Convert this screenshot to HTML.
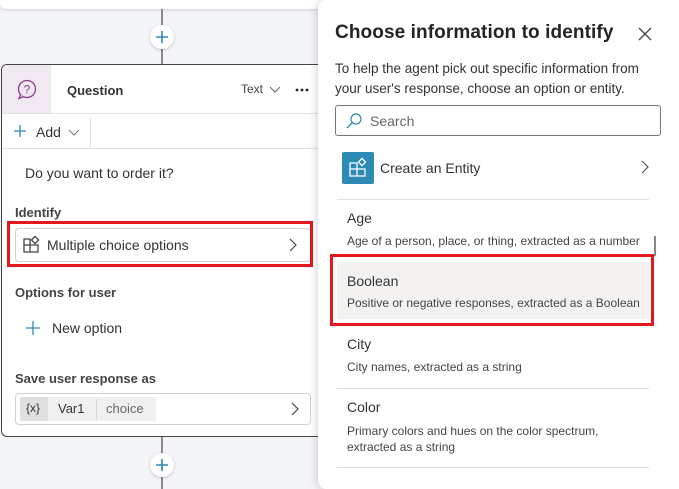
<!DOCTYPE html>
<html><head><meta charset="utf-8"><style>
*{margin:0;padding:0;box-sizing:border-box}
body{width:679px;height:489px;overflow:hidden;background:#f3f5f8;font-family:"Liberation Sans",sans-serif;color:#242424;position:relative}
.a{position:absolute}
.t{position:absolute;white-space:nowrap}
</style></head><body>
<div class="a" style="left:0;top:-10px;width:330px;height:19px;background:#fff;border-radius:6px;box-shadow:0 1px 3px rgba(0,0,0,.15)"></div>
<div class="a" style="left:161px;top:9px;width:2px;height:56px;background:#8a8a8a"></div>
<div class="a" style="left:161px;top:436px;width:2px;height:53px;background:#8a8a8a"></div>
<div class="a" style="left:150px;top:25px;width:24px;height:24px;border-radius:50%;background:#fff;box-shadow:0 1px 3px rgba(0,0,0,.2)"><svg width="24" height="24"><path d="M12 6v12M6 12h12" stroke="#2b88b0" stroke-width="1.6"/></svg></div>
<div class="a" style="left:150px;top:453px;width:24px;height:24px;border-radius:50%;background:#fff;box-shadow:0 1px 3px rgba(0,0,0,.2)"><svg width="24" height="24"><path d="M12 6v12M6 12h12" stroke="#2b88b0" stroke-width="1.6"/></svg></div>
<div class="a" style="left:1px;top:64px;width:340px;height:373px;background:#fff;border:1px solid #444;border-radius:6px;overflow:hidden">
 <div class="a" style="left:0;top:0;width:49px;height:49px;background:#f0e9f1"><svg width="49" height="49"><circle cx="25" cy="24" r="8.5" fill="none" stroke="#8a3f8a" stroke-width="1.3"/><path d="M18.5 29.5l-1.5 4 4.5-2" fill="#f0e9f1" stroke="#8a3f8a" stroke-width="1.3"/><text x="25" y="28.5" font-size="12" text-anchor="middle" fill="#8a3f8a" font-family="Liberation Sans">?</text></svg></div>
 <div class="t" style="left:65px;top:18px;font-size:13px;font-weight:bold;color:#333">Question</div>
 <div class="t" style="left:239px;top:17px;font-size:12px;color:#444">Text</div>
 <svg class="a" style="left:266px;top:19px" width="14" height="10"><path d="M2 3l5 5 5-5" fill="none" stroke="#666"/></svg>
 <svg class="a" style="left:292px;top:22px" width="16" height="6"><circle cx="3" cy="3" r="1.4" fill="#222"/><circle cx="8" cy="3" r="1.4" fill="#222"/><circle cx="13" cy="3" r="1.4" fill="#222"/></svg>
 <div class="a" style="left:0;top:48px;width:340px;height:1px;background:#e1e1e1"></div>
 <svg class="a" style="left:11px;top:59px" width="14" height="14"><path d="M7 1v12M1 7h12" stroke="#2b88b0" stroke-width="1.3"/></svg>
 <div class="t" style="left:34px;top:59px;font-size:14px;color:#333">Add</div>
 <svg class="a" style="left:66px;top:62px" width="12" height="10"><path d="M1 3l5 5 5-5" fill="none" stroke="#777"/></svg>
 <div class="a" style="left:88px;top:53px;width:1px;height:30px;background:#e1e1e1"></div>
 <div class="a" style="left:0;top:83px;width:340px;height:1px;background:#e1e1e1"></div>
 <div class="t" style="left:23px;top:100px;font-size:14px;color:#333">Do you want to order it?</div>
 <div class="t" style="left:13px;top:140px;font-size:13px;font-weight:bold;color:#444">Identify</div>
 <div class="a" style="left:13px;top:163px;width:296px;height:34px;border:1px solid #d1d1d1;border-radius:4px"></div>
 <svg class="a" style="left:20px;top:170px" width="20" height="20"><path d="M2 4h6v6H2zM2 10h6v7H2zM8 10h8v7H8z" fill="none" stroke="#444" stroke-width="1.3"/><rect x="10.5" y="2.5" width="5" height="5" transform="rotate(45 13 5)" fill="none" stroke="#444" stroke-width="1.3"/></svg>
 <div class="t" style="left:45px;top:172px;font-size:14px;color:#333">Multiple choice options</div>
 <svg class="a" style="left:286px;top:173px" width="10" height="14"><path d="M2 1l6 6-6 6" fill="none" stroke="#444" stroke-width="1.2"/></svg>
 <div class="t" style="left:13px;top:220px;font-size:13px;font-weight:bold;color:#444">Options for user</div>
 <svg class="a" style="left:23px;top:255px" width="16" height="16"><path d="M8 1v14M1 8h14" stroke="#2b88b0" stroke-width="1.3"/></svg>
 <div class="t" style="left:50px;top:255px;font-size:14px;color:#333">New option</div>
 <div class="t" style="left:13px;top:306px;font-size:13px;font-weight:bold;color:#444">Save user response as</div>
 <div class="a" style="left:13px;top:328px;width:296px;height:32px;border:1px solid #d1d1d1;border-radius:4px"></div>
 <div class="a" style="left:18px;top:332px;width:28px;height:24px;background:#e0e0e0;border-radius:2px 0 0 2px"></div>
 <div class="a" style="left:46px;top:332px;width:108px;height:24px;background:#f0f0f0"></div>
 <div class="a" style="left:94px;top:334px;width:1px;height:20px;background:#d6d6d6"></div>
 <div class="t" style="left:24px;top:336px;font-size:12px;color:#333">{x}</div>
 <div class="t" style="left:56px;top:336px;font-size:13px;color:#333">Var1</div>
 <div class="t" style="left:104px;top:336px;font-size:13px;color:#666">choice</div>
 <svg class="a" style="left:288px;top:337px" width="10" height="14"><path d="M2 1l6 6-6 6" fill="none" stroke="#444" stroke-width="1.2"/></svg>
</div>
<div class="a" style="left:7px;top:221px;width:306px;height:46px;border:3px solid #e3191e"></div>
<div class="a" style="left:318px;top:0;width:361px;height:489px;background:#fff;border-radius:8px 0 0 8px;box-shadow:-2px 0 8px rgba(0,0,0,.15)">
 <div class="t" style="left:17px;top:22px;font-size:19px;font-weight:bold;color:#242424;letter-spacing:0.1px">Choose information to identify</div>
 <svg class="a" style="left:320px;top:27px" width="14" height="14"><path d="M1 1l12 12M13 1L1 13" stroke="#444" stroke-width="1.3"/></svg>
 <div class="t" style="left:17px;top:59px;font-size:13.5px;line-height:20px;color:#333">To help the agent pick out specific information from<br>your user's response, choose an option or entity.</div>
 <div class="a" style="left:17px;top:105px;width:326px;height:31px;border:1px solid #777;border-radius:3px"></div>
 <svg class="a" style="left:27px;top:112px" width="18" height="18"><circle cx="11" cy="7" r="5" fill="none" stroke="#2b88b0" stroke-width="1.2"/><path d="M7.5 10.5L2 16" stroke="#2b88b0" stroke-width="1.3"/></svg>
 <div class="t" style="left:52px;top:113px;font-size:14px;color:#666">Search</div>
 <div class="a" style="left:24px;top:152px;width:32px;height:32px;background:#2d8ab5;border-radius:2px"><svg width="32" height="32"><path d="M8 11h7v6H8zM8 17h7v7H8zM15 17h8v7h-8z" fill="none" stroke="#fff" stroke-width="1.3"/><rect x="17.5" y="7.5" width="5" height="5" transform="rotate(45 20 10)" fill="none" stroke="#fff" stroke-width="1.3"/></svg></div>
 <div class="t" style="left:62px;top:160px;font-size:14px;color:#333">Create an Entity</div>
 <svg class="a" style="left:322px;top:160px" width="10" height="14"><path d="M2 1l6 6-6 6" fill="none" stroke="#555" stroke-width="1.2"/></svg>
 <div class="a" style="left:19px;top:199px;width:312px;height:1px;background:#e1e1e1"></div>
 <div class="t" style="left:29px;top:210px;font-size:14px;color:#333">Age</div>
 <div class="t" style="left:29px;top:234px;font-size:12px;color:#444">Age of a person, place, or thing, extracted as a number</div>
 <div class="a" style="left:336px;top:236px;width:2px;height:20px;background:#888"></div>
 <div class="a" style="left:19px;top:262px;width:312px;height:57px;background:#f3f2f1"></div>
 <div class="t" style="left:29px;top:273px;font-size:14px;color:#333">Boolean</div>
 <div class="t" style="left:29px;top:296px;font-size:12px;color:#444">Positive or negative responses, extracted as a Boolean</div>
 <div class="t" style="left:29px;top:336px;font-size:14px;color:#333">City</div>
 <div class="t" style="left:29px;top:360px;font-size:12px;color:#444">City names, extracted as a string</div>
 <div class="a" style="left:19px;top:388px;width:312px;height:1px;background:#e1e1e1"></div>
 <div class="t" style="left:29px;top:399px;font-size:14px;color:#333">Color</div>
 <div class="t" style="left:29px;top:423px;font-size:12px;line-height:16px;color:#444">Primary colors and hues on the color spectrum,<br>extracted as a string</div>
 <div class="a" style="left:19px;top:467px;width:312px;height:1px;background:#e1e1e1"></div>
</div>
<div class="a" style="left:330px;top:254px;width:324px;height:72px;border:3px solid #e3191e"></div>
</body></html>
